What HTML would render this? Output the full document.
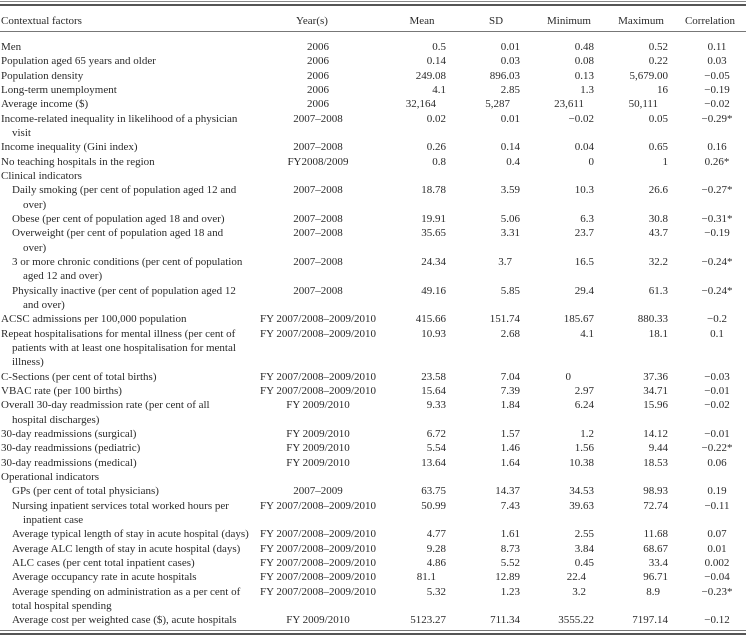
<!DOCTYPE html><html><head><meta charset="utf-8"><style>
body{margin:0;background:#fff;width:746px;height:636px;position:relative;overflow:hidden;font-family:"Liberation Serif",serif;font-size:11px;color:#2a2a2a}
.r{position:absolute;left:0;width:746px;height:14px;line-height:14px;white-space:nowrap}
.r span{position:absolute;top:0}
.t{left:1px}.i{left:12px}.h{left:23px}
.y{left:253px;width:130px;text-align:center}
.m{right:300px}.s{right:226px}.n{right:152px}.x{right:78px}
.c{left:677px;width:80px;text-align:center}
.ln{position:absolute;left:0;width:746px;background:#555}
</style></head><body>
<div class="ln" style="top:1px;height:1px;background:#888"></div>
<div class="ln" style="top:4px;height:2px"></div>
<div class="ln" style="top:31px;height:1px;background:#777"></div>
<div class="ln" style="top:630px;height:1px;background:#777"></div>
<div class="ln" style="top:633px;height:2px"></div>
<div class="r" style="top:14px"><span class="t">Contextual factors</span><span class="y" style="left:247px">Year(s)</span><span style="left:402px;width:40px;text-align:center">Mean</span><span style="left:476px;width:40px;text-align:center">SD</span><span style="left:539px;width:60px;text-align:center">Minimum</span><span style="left:611px;width:60px;text-align:center">Maximum</span><span style="left:670px;width:80px;text-align:center">Correlation</span></div>

<div class="r" style="top:40px"><span class="t">Men</span><span class="y">2006</span><span class="m">0.5</span><span class="s">0.01</span><span class="n">0.48</span><span class="x">0.52</span><span class="c">0.11</span></div>
<div class="r" style="top:54.3px"><span class="t">Population aged 65 years and older</span><span class="y">2006</span><span class="m">0.14</span><span class="s">0.03</span><span class="n">0.08</span><span class="x">0.22</span><span class="c">0.03</span></div>
<div class="r" style="top:68.7px"><span class="t">Population density</span><span class="y">2006</span><span class="m">249.08</span><span class="s">896.03</span><span class="n">0.13</span><span class="x">5,679.00</span><span class="c">−0.05</span></div>
<div class="r" style="top:83px"><span class="t">Long-term unemployment</span><span class="y">2006</span><span class="m">4.1</span><span class="s">2.85</span><span class="n">1.3</span><span class="x">16</span><span class="c">−0.19</span></div>
<div class="r" style="top:97.3px"><span class="t">Average income ($)</span><span class="y">2006</span><span class="m" style="right:310px">32,164</span><span class="s" style="right:236px">5,287</span><span class="n" style="right:162px">23,611</span><span class="x" style="right:88px">50,111</span><span class="c">−0.02</span></div>
<div class="r" style="top:111.7px"><span class="t">Income-related inequality in likelihood of a physician</span><span class="y">2007–2008</span><span class="m">0.02</span><span class="s">0.01</span><span class="n">−0.02</span><span class="x">0.05</span><span class="c">−0.29*</span></div>
<div class="r" style="top:126px"><span class="i">visit</span></div>
<div class="r" style="top:140.3px"><span class="t">Income inequality (Gini index)</span><span class="y">2007–2008</span><span class="m">0.26</span><span class="s">0.14</span><span class="n">0.04</span><span class="x">0.65</span><span class="c">0.16</span></div>
<div class="r" style="top:154.6px"><span class="t">No teaching hospitals in the region</span><span class="y">FY2008/2009</span><span class="m">0.8</span><span class="s">0.4</span><span class="n">0</span><span class="x">1</span><span class="c">0.26*</span></div>
<div class="r" style="top:169px"><span class="t">Clinical indicators</span></div>
<div class="r" style="top:183.3px"><span class="i">Daily smoking (per cent of population aged 12 and</span><span class="y">2007–2008</span><span class="m">18.78</span><span class="s">3.59</span><span class="n">10.3</span><span class="x">26.6</span><span class="c">−0.27*</span></div>
<div class="r" style="top:197.6px"><span class="h">over)</span></div>
<div class="r" style="top:212px"><span class="i">Obese (per cent of population aged 18 and over)</span><span class="y">2007–2008</span><span class="m">19.91</span><span class="s">5.06</span><span class="n">6.3</span><span class="x">30.8</span><span class="c">−0.31*</span></div>
<div class="r" style="top:226.3px"><span class="i">Overweight (per cent of population aged 18 and</span><span class="y">2007–2008</span><span class="m">35.65</span><span class="s">3.31</span><span class="n">23.7</span><span class="x">43.7</span><span class="c">−0.19</span></div>
<div class="r" style="top:240.6px"><span class="h">over)</span></div>
<div class="r" style="top:255px"><span class="i">3 or more chronic conditions (per cent of population</span><span class="y">2007–2008</span><span class="m">24.34</span><span class="s" style="right:234px">3.7</span><span class="n">16.5</span><span class="x">32.2</span><span class="c">−0.24*</span></div>
<div class="r" style="top:269.3px"><span class="h">aged 12 and over)</span></div>
<div class="r" style="top:283.6px"><span class="i">Physically inactive (per cent of population aged 12</span><span class="y">2007–2008</span><span class="m">49.16</span><span class="s">5.85</span><span class="n">29.4</span><span class="x">61.3</span><span class="c">−0.24*</span></div>
<div class="r" style="top:298px"><span class="h">and over)</span></div>
<div class="r" style="top:312.3px"><span class="t">ACSC admissions per 100,000 population</span><span class="y">FY 2007/2008–2009/2010</span><span class="m">415.66</span><span class="s">151.74</span><span class="n">185.67</span><span class="x">880.33</span><span class="c">−0.2</span></div>
<div class="r" style="top:326.6px"><span class="t">Repeat hospitalisations for mental illness (per cent of</span><span class="y">FY 2007/2008–2009/2010</span><span class="m">10.93</span><span class="s">2.68</span><span class="n">4.1</span><span class="x">18.1</span><span class="c">0.1</span></div>
<div class="r" style="top:341px"><span class="i">patients with at least one hospitalisation for mental</span></div>
<div class="r" style="top:355.3px"><span class="i">illness)</span></div>
<div class="r" style="top:369.6px"><span class="t">C-Sections (per cent of total births)</span><span class="y">FY 2007/2008–2009/2010</span><span class="m">23.58</span><span class="s">7.04</span><span class="n" style="right:175px">0</span><span class="x">37.36</span><span class="c">−0.03</span></div>
<div class="r" style="top:384px"><span class="t">VBAC rate (per 100 births)</span><span class="y">FY 2007/2008–2009/2010</span><span class="m">15.64</span><span class="s">7.39</span><span class="n">2.97</span><span class="x">34.71</span><span class="c">−0.01</span></div>
<div class="r" style="top:398.3px"><span class="t">Overall 30-day readmission rate (per cent of all</span><span class="y">FY 2009/2010</span><span class="m">9.33</span><span class="s">1.84</span><span class="n">6.24</span><span class="x">15.96</span><span class="c">−0.02</span></div>
<div class="r" style="top:412.6px"><span class="i">hospital discharges)</span></div>
<div class="r" style="top:427px"><span class="t">30-day readmissions (surgical)</span><span class="y">FY 2009/2010</span><span class="m">6.72</span><span class="s">1.57</span><span class="n">1.2</span><span class="x">14.12</span><span class="c">−0.01</span></div>
<div class="r" style="top:441.3px"><span class="t">30-day readmissions (pediatric)</span><span class="y">FY 2009/2010</span><span class="m">5.54</span><span class="s">1.46</span><span class="n">1.56</span><span class="x">9.44</span><span class="c">−0.22*</span></div>
<div class="r" style="top:455.6px"><span class="t">30-day readmissions (medical)</span><span class="y">FY 2009/2010</span><span class="m">13.64</span><span class="s">1.64</span><span class="n">10.38</span><span class="x">18.53</span><span class="c">0.06</span></div>
<div class="r" style="top:470px"><span class="t">Operational indicators</span></div>
<div class="r" style="top:484.3px"><span class="i">GPs (per cent of total physicians)</span><span class="y">2007–2009</span><span class="m">63.75</span><span class="s">14.37</span><span class="n">34.53</span><span class="x">98.93</span><span class="c">0.19</span></div>
<div class="r" style="top:498.6px"><span class="i">Nursing inpatient services total worked hours per</span><span class="y">FY 2007/2008–2009/2010</span><span class="m">50.99</span><span class="s">7.43</span><span class="n">39.63</span><span class="x">72.74</span><span class="c">−0.11</span></div>
<div class="r" style="top:513px"><span class="h">inpatient case</span></div>
<div class="r" style="top:527.3px"><span class="i">Average typical length of stay in acute hospital (days)</span><span class="y">FY 2007/2008–2009/2010</span><span class="m">4.77</span><span class="s">1.61</span><span class="n">2.55</span><span class="x">11.68</span><span class="c">0.07</span></div>
<div class="r" style="top:541.6px"><span class="i">Average ALC length of stay in acute hospital (days)</span><span class="y">FY 2007/2008–2009/2010</span><span class="m">9.28</span><span class="s">8.73</span><span class="n">3.84</span><span class="x">68.67</span><span class="c">0.01</span></div>
<div class="r" style="top:556px"><span class="i">ALC cases (per cent total inpatient cases)</span><span class="y">FY 2007/2008–2009/2010</span><span class="m">4.86</span><span class="s">5.52</span><span class="n">0.45</span><span class="x">33.4</span><span class="c">0.002</span></div>
<div class="r" style="top:570.3px"><span class="i">Average occupancy rate in acute hospitals</span><span class="y">FY 2007/2008–2009/2010</span><span class="m" style="right:310px">81.1</span><span class="s">12.89</span><span class="n" style="right:160px">22.4</span><span class="x">96.71</span><span class="c">−0.04</span></div>
<div class="r" style="top:584.6px"><span class="i">Average spending on administration as a per cent of</span><span class="y">FY 2007/2008–2009/2010</span><span class="m">5.32</span><span class="s">1.23</span><span class="n" style="right:160px">3.2</span><span class="x" style="right:86px">8.9</span><span class="c">−0.23*</span></div>
<div class="r" style="top:599px"><span class="i">total hospital spending</span></div>
<div class="r" style="top:613.3px"><span class="i">Average cost per weighted case ($), acute hospitals</span><span class="y">FY 2009/2010</span><span class="m">5123.27</span><span class="s">711.34</span><span class="n">3555.22</span><span class="x">7197.14</span><span class="c">−0.12</span></div>
</body></html>
